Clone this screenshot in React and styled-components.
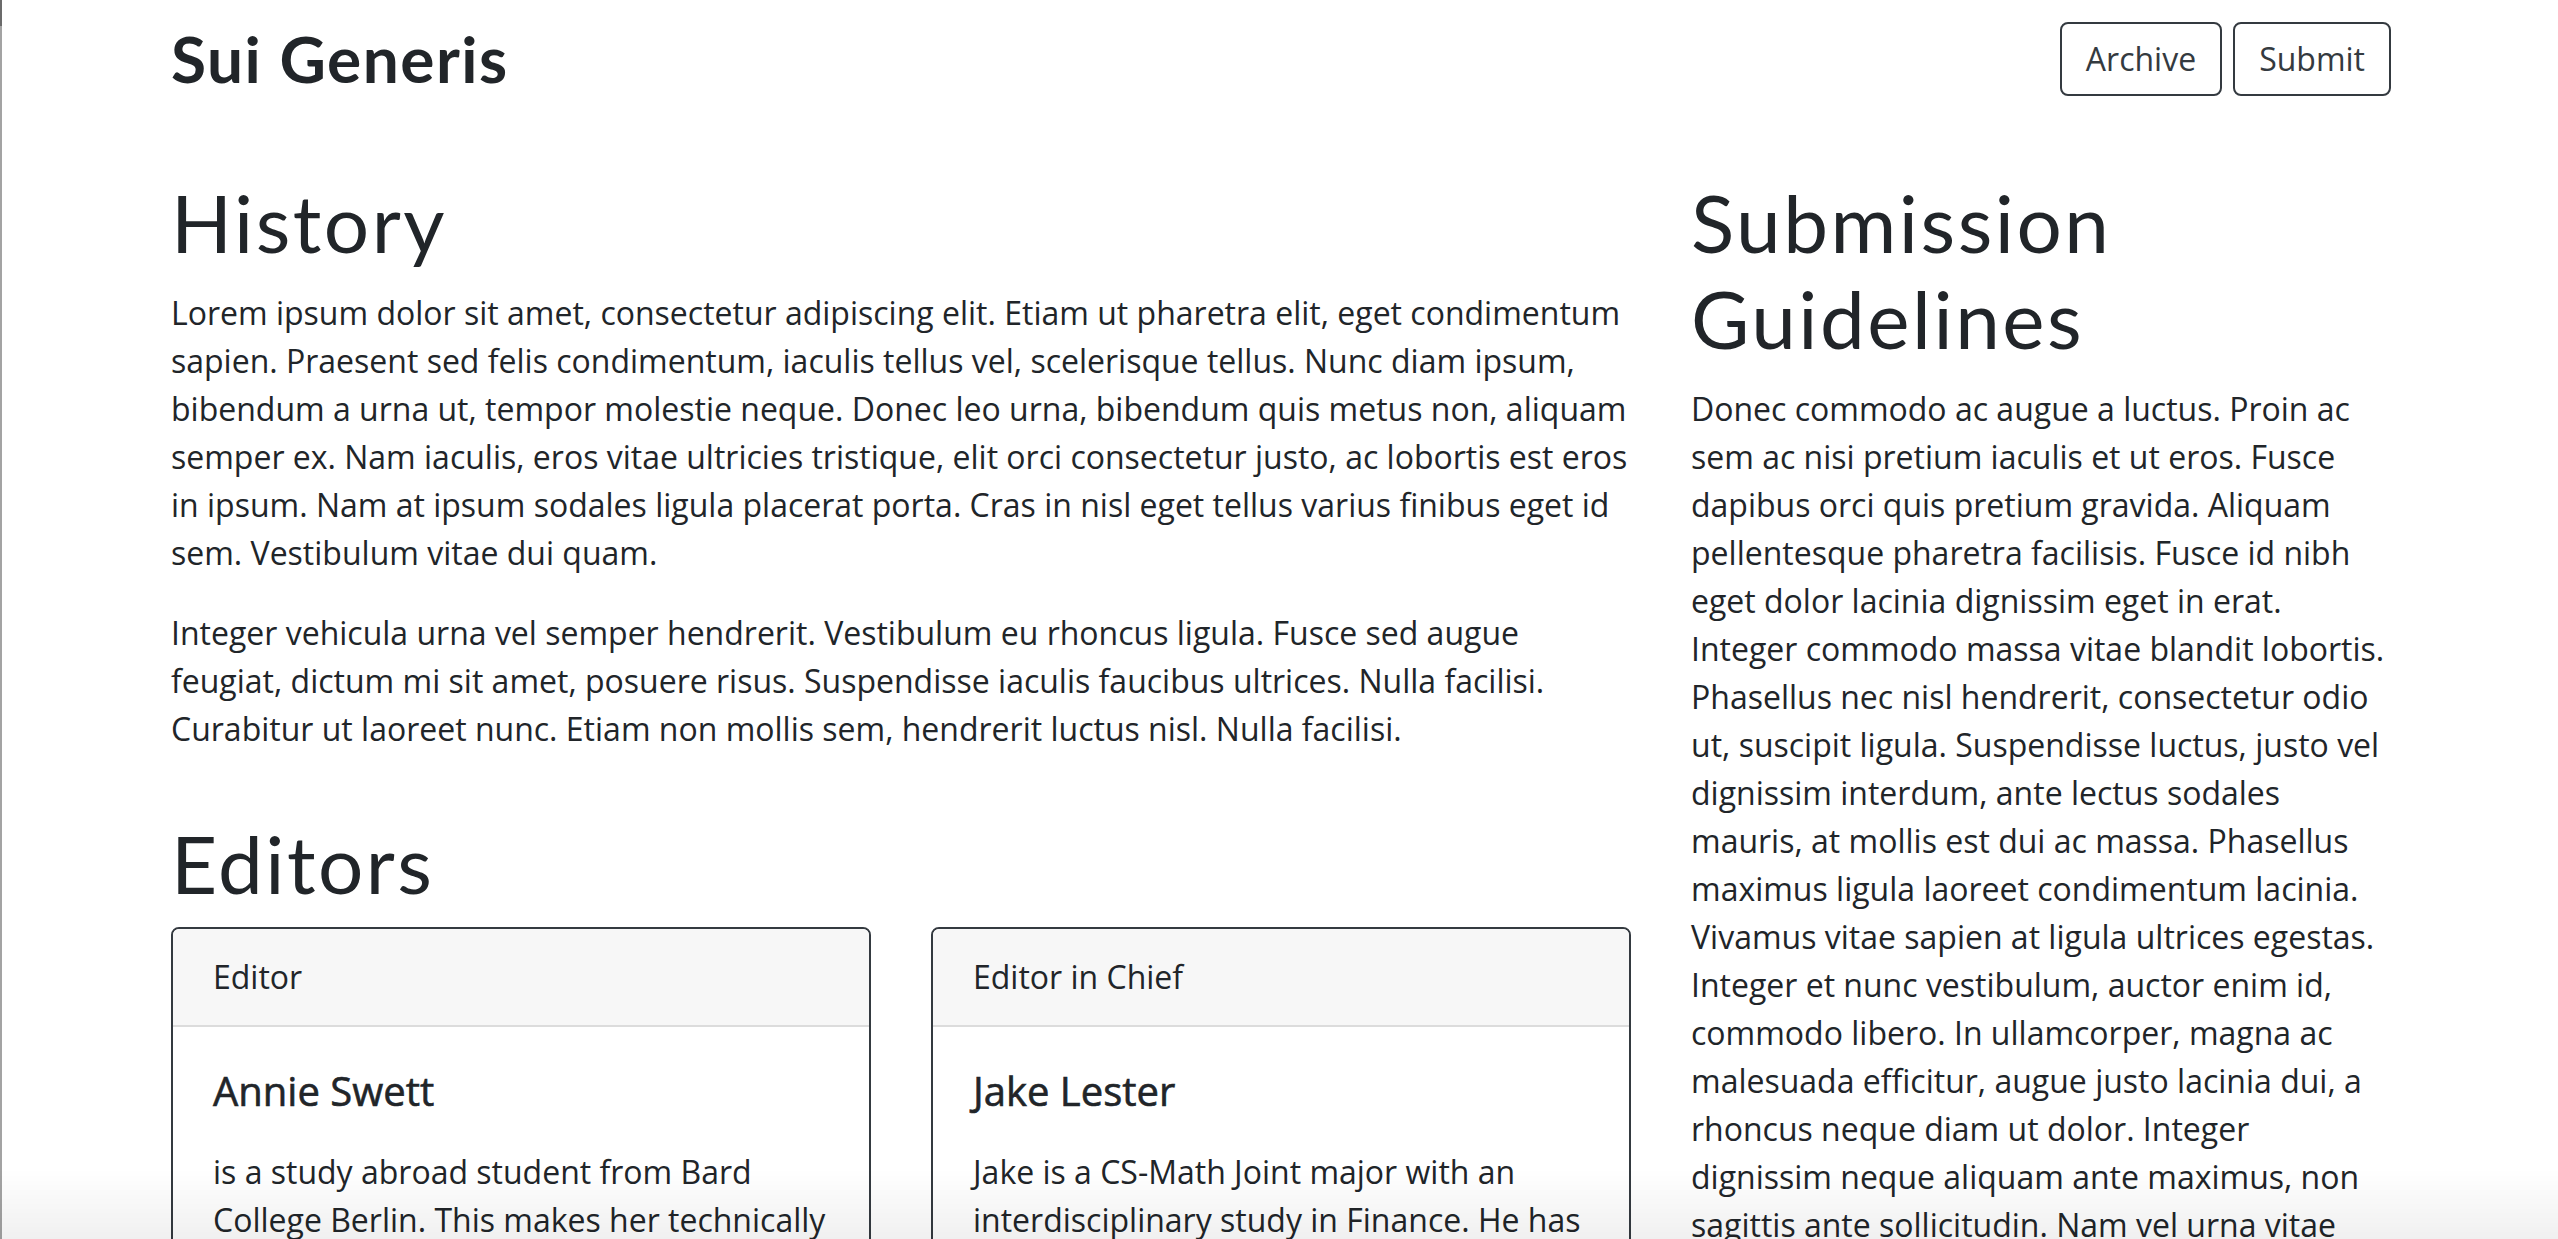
import React from 'react'
import styled, { createGlobalStyle } from 'styled-components'

const GlobalStyle = createGlobalStyle`
  html, body {
    margin: 0;
    padding: 0;
    background: #fff;
  }
  body {
    font-family: 'Open Sans', 'Noto Sans', sans-serif;
    font-size: 32px;
    line-height: 1.5;
    color: #212529;
  }
  * {
    box-sizing: border-box;
  }
`

const Page = styled.div`
  height: 100vh;
  overflow: hidden;
  position: relative;
  padding-left: 4px;
`

const WindowEdge = styled.div`
  position: fixed;
  left: 0;
  top: 0;
  bottom: 0;
  width: 2px;
  background: linear-gradient(to bottom, #6b6b6b 0, #6b6b6b 26px, #a3a3a3 26px);
  z-index: 2;
`

const BottomShade = styled.div`
  position: fixed;
  left: 0;
  right: 0;
  bottom: 0;
  height: 70px;
  background: linear-gradient(to bottom, rgba(0, 0, 0, 0), rgba(0, 0, 0, 0.06));
  pointer-events: none;
  z-index: 2;
`

const Container = styled.div`
  width: 2220px;
  margin: 0 auto;
`

const Navbar = styled.nav`
  display: flex;
  justify-content: space-between;
  align-items: center;
  height: 118px;
`

const Brand = styled.a`
  font-family: 'Lato', 'Noto Sans', sans-serif;
  font-weight: 700;
  font-size: 64px;
  line-height: 1.5;
  letter-spacing: 1.5px;
  color: #212529;
  text-decoration: none;
`

const NavButtons = styled.div`
  display: flex;
  gap: 11px;
`

const OutlineButton = styled.button`
  font-family: 'Open Sans', sans-serif;
  font-size: 32px;
  line-height: 48px;
  padding: 11px 24px;
  color: #343a40;
  background: transparent;
  border: 2px solid #343a40;
  border-radius: 8px;
`

const Main = styled.main`
  display: grid;
  grid-template-columns: 1460px 700px;
  column-gap: 60px;
  padding-top: 56px;
`

const Column = styled.section``

const Heading = styled.h1`
  font-family: 'Lato', 'Noto Sans', sans-serif;
  font-weight: 400;
  font-size: 80px;
  line-height: 1.2;
  letter-spacing: 2.5px;
  margin: ${p => (p.$spaced ? '62px 0 16px' : '0 0 19px')};
  color: #212529;
`

const Paragraph = styled.p`
  margin: 0 0 32px;
`

const CardRow = styled.div`
  display: grid;
  grid-template-columns: 1fr 1fr;
  column-gap: 60px;
`

const Card = styled.div`
  border: 2px solid #343a40;
  border-radius: 8px;
  overflow: hidden;
`

const CardHeader = styled.div`
  padding: 24px 40px;
  background: #f7f7f7;
  border-bottom: 2px solid #dcdcdc;
`

const CardBody = styled.div`
  padding: 40px;
`

const CardTitle = styled.h5`
  font-family: 'Open Sans', sans-serif;
  font-weight: 400;
  -webkit-text-stroke: 0.6px #212529;
  font-size: 40px;
  line-height: 1.2;
  margin: 0 0 33px;
`

const CardText = styled.p`
  margin: 0;
`

const editors = [
  {
    role: 'Editor',
    name: 'Annie Swett',
    bio:
      'is a study abroad student from Bard College Berlin. This makes her technically a visiting student, but she has been part of the journal since her arrival.'
  },
  {
    role: 'Editor in Chief',
    name: 'Jake Lester',
    bio:
      'Jake is a CS-Math Joint major with an interdisciplinary study in Finance. He has been writing for the journal since his first year.'
  }
]

export default function App() {
  return (
    <Page>
      <GlobalStyle />
      <WindowEdge />
      <Container>
        <Navbar>
          <Brand href="#">Sui Generis</Brand>
          <NavButtons>
            <OutlineButton>Archive</OutlineButton>
            <OutlineButton>Submit</OutlineButton>
          </NavButtons>
        </Navbar>
        <Main>
          <Column>
            <Heading>History</Heading>
            <Paragraph>
              Lorem ipsum dolor sit amet, consectetur adipiscing elit. Etiam ut pharetra elit, eget condimentum
              sapien. Praesent sed felis condimentum, iaculis tellus vel, scelerisque tellus. Nunc diam ipsum,
              bibendum a urna ut, tempor molestie neque. Donec leo urna, bibendum quis metus non, aliquam semper
              ex. Nam iaculis, eros vitae ultricies tristique, elit orci consectetur justo, ac lobortis est eros in
              ipsum. Nam at ipsum sodales ligula placerat porta. Cras in nisl eget tellus varius finibus eget id
              sem. Vestibulum vitae dui quam.
            </Paragraph>
            <Paragraph>
              Integer vehicula urna vel semper hendrerit. Vestibulum eu rhoncus ligula. Fusce sed augue feugiat,
              dictum mi sit amet, posuere risus. Suspendisse iaculis faucibus ultrices. Nulla facilisi. Curabitur
              ut laoreet nunc. Etiam non mollis sem, hendrerit luctus nisl. Nulla facilisi.
            </Paragraph>
            <Heading $spaced>Editors</Heading>
            <CardRow>
              {editors.map(editor => (
                <Card key={editor.name}>
                  <CardHeader>{editor.role}</CardHeader>
                  <CardBody>
                    <CardTitle>{editor.name}</CardTitle>
                    <CardText>{editor.bio}</CardText>
                  </CardBody>
                </Card>
              ))}
            </CardRow>
          </Column>
          <Column>
            <Heading>Submission Guidelines</Heading>
            <Paragraph>
              Donec commodo ac augue a luctus. Proin ac sem ac nisi pretium iaculis et ut eros. Fusce dapibus orci
              quis pretium gravida. Aliquam pellentesque pharetra facilisis. Fusce id nibh eget dolor lacinia
              dignissim eget in erat. Integer commodo massa vitae blandit lobortis. Phasellus nec nisl hendrerit,
              consectetur odio ut, suscipit ligula. Suspendisse luctus, justo vel dignissim interdum, ante lectus
              sodales mauris, at mollis est dui ac massa. Phasellus maximus ligula laoreet condimentum lacinia.
              Vivamus vitae sapien at ligula ultrices egestas. Integer et nunc vestibulum, auctor enim id, commodo
              libero. In ullamcorper, magna ac malesuada efficitur, augue justo lacinia dui, a rhoncus neque diam ut
              dolor. Integer dignissim neque aliquam ante maximus, non sagittis ante sollicitudin. Nam vel urna
              vitae tortor ornare tincidunt. Morbi sit amet felis sed nisi tincidunt faucibus.
            </Paragraph>
          </Column>
        </Main>
      </Container>
      <BottomShade />
    </Page>
  )
}
